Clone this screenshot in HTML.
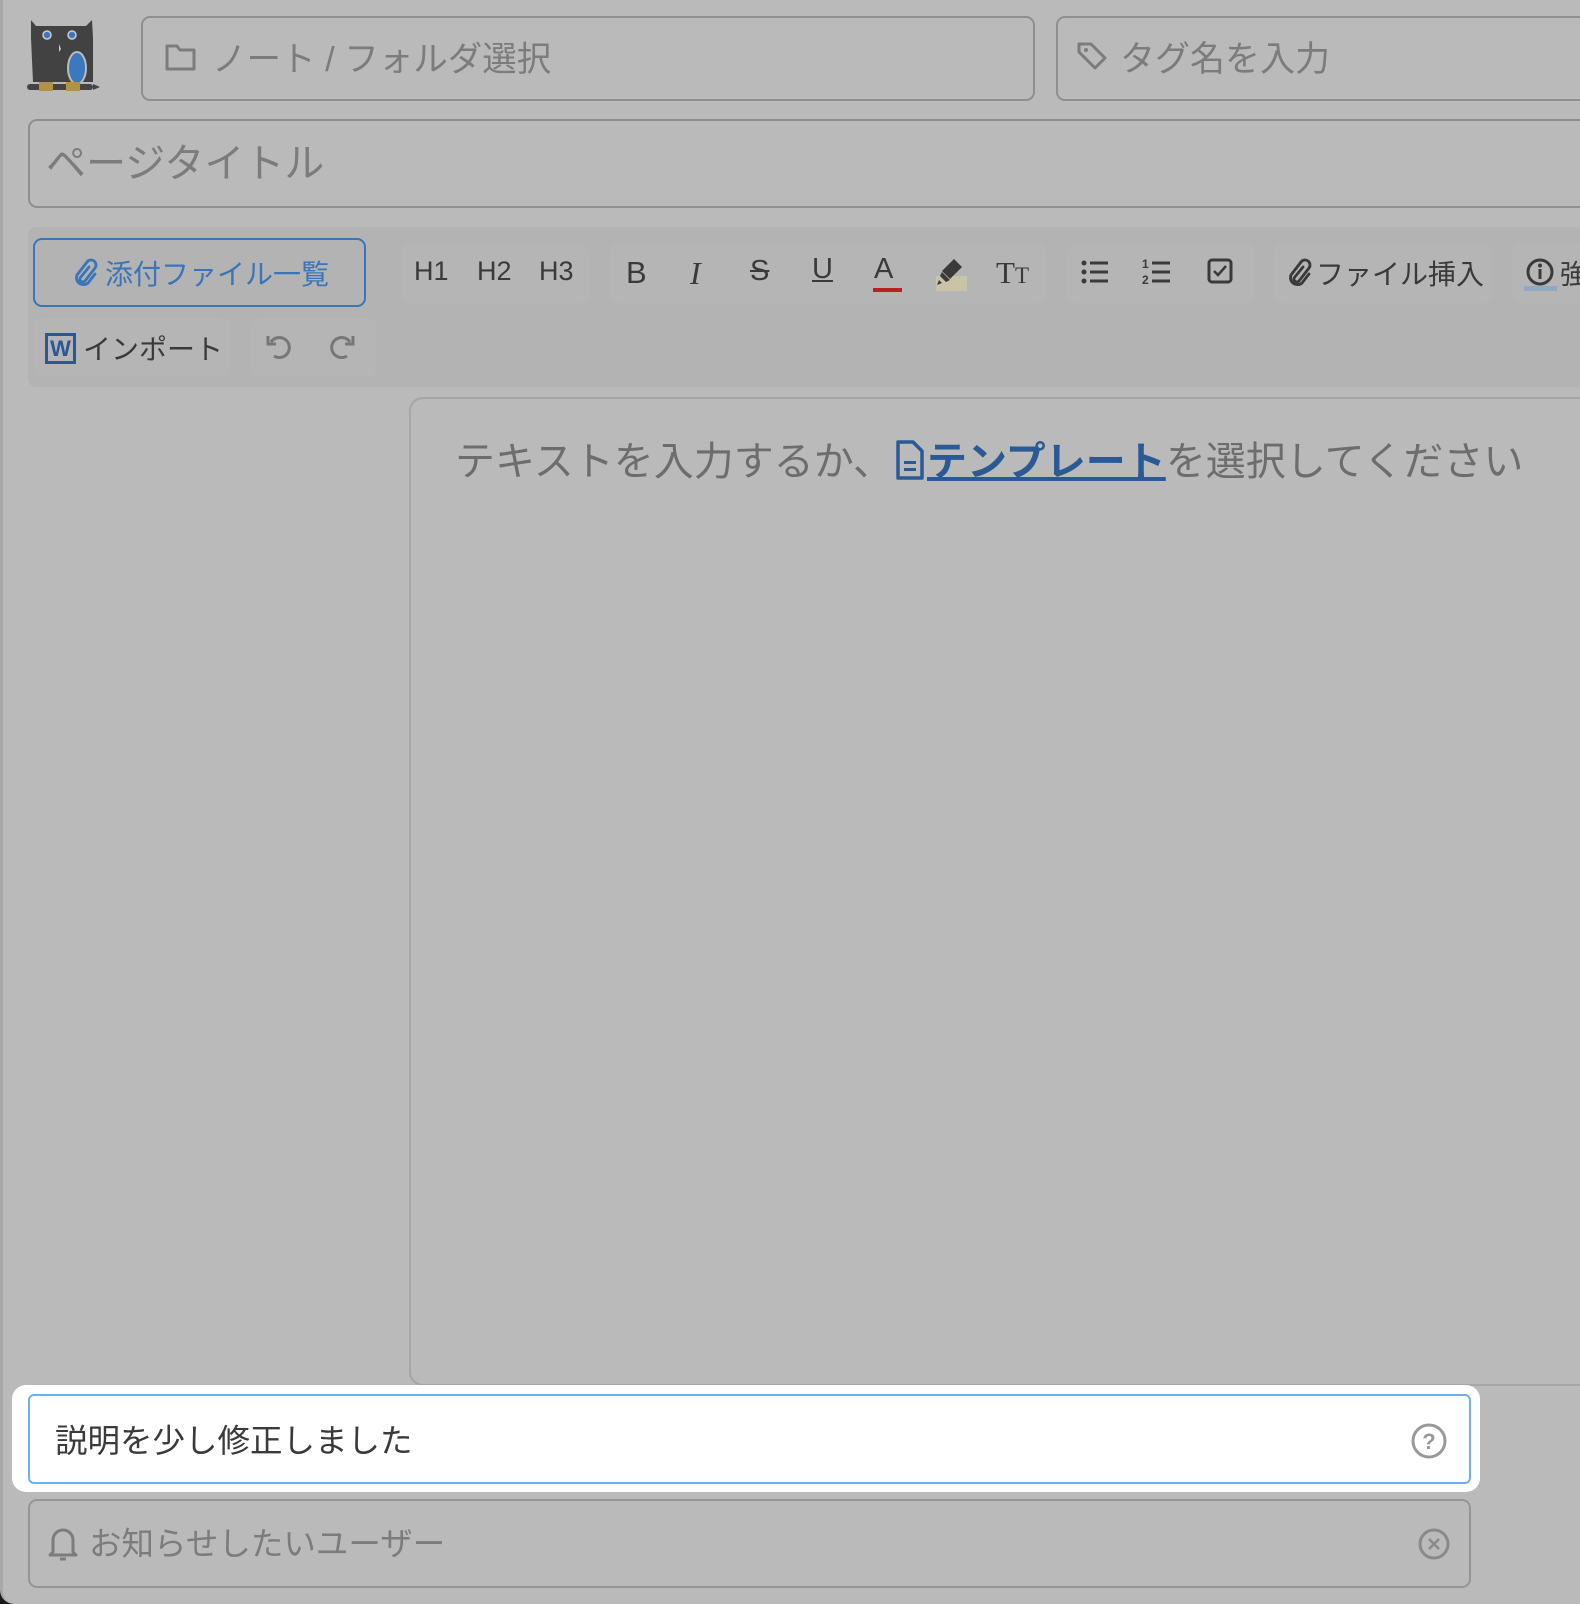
<!DOCTYPE html>
<html><head><meta charset="utf-8"><style>
*{box-sizing:border-box;margin:0;padding:0}
body{width:1580px;height:1604px;background:#1a1a1a;font-family:"Liberation Sans","Noto Sans CJK JP",sans-serif;overflow:hidden;position:relative}
.bg{position:absolute;left:0;top:0;width:1580px;height:1604px;background:#bababa;border-radius:0 0 0 14px;border-left:3px solid #a8a8a8}
.box{position:absolute;border:2px solid #8f8f8f;border-radius:9px}
.t{position:absolute;color:#7c7c7c;white-space:nowrap}
.grp{position:absolute;background:#b5b5b5;border-radius:8px}
.tb{position:absolute;color:#3a3a3a;font-size:27px;white-space:nowrap}
</style></head><body>
<div class="bg"></div>
<svg style="position:absolute;left:26px;top:18px" width="74" height="78" viewBox="0 0 74 78">
<path d="M5 2 L10 8 L60 8 L66 2 L67 20 L67 64 L7 64 L5 20Z" fill="#424242"/>
<circle cx="21" cy="17" r="4" fill="#3c78c0" stroke="#ccc" stroke-width="1.5"/>
<circle cx="46" cy="17" r="4" fill="#3c78c0" stroke="#ccc" stroke-width="1.5"/>
<path d="M33 26 l2 5 l-2 3z" fill="#ccc"/>
<ellipse cx="51" cy="50" rx="9" ry="16" fill="#3c78c0" stroke="#bbb" stroke-width="2"/>
<rect x="1" y="66" width="66" height="6" rx="3" fill="#444"/><path d="M67 66 l7 3 l-7 3z" fill="#444"/>
<rect x="13" y="64" width="14" height="9" fill="#b39148"/><rect x="40" y="64" width="14" height="9" fill="#b39148"/>
</svg>
<div class="box" style="left:141px;top:16px;width:894px;height:85px"></div>
<svg style="position:absolute;left:164px;top:42px" width="34" height="30" viewBox="0 0 34 30"><path d="M3 4 h10 l3 4 h14 v19 h-27z" fill="none" stroke="#7c7c7c" stroke-width="3" stroke-linejoin="round"/></svg>
<div class="t" style="left:212px;top:31px;font-size:34.5px">ノート / フォルダ選択</div>
<div class="box" style="left:1056px;top:16px;width:540px;height:85px"></div>
<svg style="position:absolute;left:1076px;top:40px" width="32" height="32" viewBox="0 0 32 32"><path d="M3 4 h12 l14 14 l-10 10 l-16 -16z" fill="none" stroke="#7c7c7c" stroke-width="3" stroke-linejoin="round"/><circle cx="10" cy="10" r="2" fill="#7c7c7c"/></svg>
<div class="t" style="left:1120px;top:31px;font-size:35px">タグ名を入力</div>
<div class="box" style="left:28px;top:119px;width:1580px;height:89px"></div>
<div class="t" style="left:46px;top:131px;font-size:40px">ページタイトル</div>
<div style="position:absolute;left:28px;top:227px;width:1560px;height:160px;background:#b3b3b3;border-radius:8px"></div>
<div style="position:absolute;left:33px;top:238px;width:333px;height:69px;border:2px solid #3b74b8;border-radius:9px"></div>
<svg style="position:absolute;left:72px;top:258px" width="26" height="30" viewBox="0 0 26 30"><path d="M17 9 l-9 11 a3 3 0 0 0 5 3 l10 -13 a5 5 0 0 0 -8 -6 l-10 13 a7 7 0 0 0 11 8 l7 -9" fill="none" stroke="#3b74b8" stroke-width="2.8" stroke-linecap="round"/></svg>
<div class="tb" style="left:105px;top:253px;color:#3b74b8;font-size:28px">添付ファイル一覧</div>
<div class="grp" style="left:401px;top:244px;width:188px;height:59px"></div>
<div class="tb" style="left:414px;top:256px">H1</div>
<div class="tb" style="left:477px;top:256px">H2</div>
<div class="tb" style="left:539px;top:256px">H3</div>
<div class="grp" style="left:610px;top:244px;width:436px;height:59px"></div>
<div class="tb" style="left:626px;top:255px;font-size:31px">B</div>
<div class="tb" style="left:690px;top:255px;font-family:'Liberation Serif',serif;font-size:32px;font-style:italic">I</div>
<div class="tb" style="left:750px;top:255px;font-size:29px;text-decoration:line-through">S</div>
<div class="tb" style="left:812px;top:253px;font-size:29px;text-decoration:underline">U</div>
<div class="tb" style="left:874px;top:253px;font-size:29px">A</div>
<div style="position:absolute;left:873px;top:288px;width:29px;height:4px;background:#b3261e"></div>
<div style="position:absolute;left:936px;top:276px;width:31px;height:15px;background:#c9c4a8"></div>
<svg style="position:absolute;left:934px;top:256px" width="32" height="32" viewBox="0 0 32 32"><path d="M20 3 l8 8 l-12 12 l-8 -8z M8 16 l8 8 l-4 2 l-6 -6z M5 24 l3 3 l-5 2z" fill="#3a3a3a"/></svg>
<div class="tb" style="left:996px;top:255px;font-family:'Liberation Serif',serif;font-size:31px">T<span style="font-size:23px">T</span></div>
<div class="grp" style="left:1067px;top:244px;width:188px;height:59px"></div>
<svg style="position:absolute;left:1080px;top:258px" width="32" height="30" viewBox="0 0 32 30"><g fill="#3a3a3a"><circle cx="4" cy="5" r="2.5"/><circle cx="4" cy="14" r="2.5"/><circle cx="4" cy="23" r="2.5"/><rect x="10" y="3.5" width="18" height="3"/><rect x="10" y="12.5" width="18" height="3"/><rect x="10" y="21.5" width="18" height="3"/></g></svg>
<svg style="position:absolute;left:1142px;top:256px" width="32" height="32" viewBox="0 0 32 32"><g fill="#3a3a3a"><text x="0" y="12" font-size="12" font-family="Liberation Sans" font-weight="bold">1</text><text x="0" y="28" font-size="12" font-family="Liberation Sans" font-weight="bold">2</text><rect x="10" y="5.5" width="18" height="3"/><rect x="10" y="14.5" width="18" height="3"/><rect x="10" y="23.5" width="18" height="3"/></g></svg>
<svg style="position:absolute;left:1206px;top:257px" width="28" height="28" viewBox="0 0 28 28"><rect x="3" y="3" width="22" height="22" rx="3" fill="none" stroke="#3a3a3a" stroke-width="3"/><path d="M8 14 l4 4 l8 -9" fill="none" stroke="#3a3a3a" stroke-width="2.5"/></svg>
<div class="grp" style="left:1274px;top:244px;width:218px;height:59px"></div>
<svg style="position:absolute;left:1286px;top:258px" width="26" height="30" viewBox="0 0 26 30"><path d="M17 9 l-9 11 a3 3 0 0 0 5 3 l10 -13 a5 5 0 0 0 -8 -6 l-10 13 a7 7 0 0 0 11 8 l7 -9" fill="none" stroke="#3a3a3a" stroke-width="2.8" stroke-linecap="round"/></svg>
<div class="tb" style="left:1316px;top:253px;font-size:28px">ファイル挿入</div>
<div class="grp" style="left:1512px;top:244px;width:100px;height:59px"></div>
<svg style="position:absolute;left:1525px;top:257px" width="30" height="30" viewBox="0 0 30 30"><circle cx="15" cy="15" r="12" fill="none" stroke="#3a3a3a" stroke-width="3"/><rect x="13.5" y="12" width="3" height="10" fill="#3a3a3a"/><circle cx="15" cy="8.5" r="2" fill="#3a3a3a"/></svg>
<div style="position:absolute;left:1524px;top:286px;width:33px;height:5px;background:#8fa9c2"></div>
<div class="tb" style="left:1560px;top:253px">強</div>
<div class="grp" style="left:33px;top:318px;width:198px;height:59px"></div>
<div style="position:absolute;left:45px;top:333px;width:31px;height:31px;border:3px solid #2b5797;color:#2b5797;font-weight:bold;font-size:22px;text-align:center;line-height:26px">W</div>
<div class="tb" style="left:83px;top:328px;font-size:28px">インポート</div>
<div class="grp" style="left:251px;top:318px;width:125px;height:59px"></div>
<svg style="position:absolute;left:264px;top:332px" width="100" height="30" viewBox="0 0 100 30"><g fill="none" stroke="#777" stroke-width="3"><path d="M7 10 a10 10 0 1 1 3 14"/><path d="M4 4 v8 h8"/><path d="M86 10 a10 10 0 1 0 -3 14"/><path d="M89 4 v8 h-8"/></g></svg>
<div style="position:absolute;left:409px;top:397px;width:1200px;height:989px;border:2px solid #a5a5a5;border-radius:14px"></div>
<div class="t" style="left:455px;top:429px;font-size:40px;color:#6d6d6d">テキストを入力するか、<svg width="34" height="42" viewBox="0 0 34 42" style="vertical-align:-6px"><path d="M5 3 h15 l9 9 v27 h-24z" fill="none" stroke="#2a5a96" stroke-width="3.5" stroke-linejoin="round"/><rect x="11" y="22" width="12" height="3" fill="#2a5a96"/><rect x="11" y="29" width="12" height="3" fill="#2a5a96"/></svg><span style="color:#2a5a96;text-decoration:underline;font-weight:bold">テンプレート</span>を選択してください</div>
<div style="position:absolute;left:12px;top:1385px;width:1468px;height:107px;background:#fff;border-radius:14px"></div>
<div style="position:absolute;left:28px;top:1394px;width:1443px;height:90px;border:2px solid #6eb0ee;border-radius:6px"></div>
<div class="t" style="left:55px;top:1415px;font-size:32.5px;color:#3a3a3a">説明を少し修正しました</div>
<svg style="position:absolute;left:1410px;top:1422px" width="38" height="38" viewBox="0 0 38 38"><circle cx="19" cy="19" r="16" fill="none" stroke="#999" stroke-width="3"/><text x="19" y="27" font-size="22" font-family="Liberation Sans" text-anchor="middle" fill="#999" font-weight="bold">?</text></svg>
<div class="box" style="left:28px;top:1499px;width:1443px;height:89px;border-color:#959595"></div>
<svg style="position:absolute;left:47px;top:1525px" width="32" height="38" viewBox="0 0 32 38"><path d="M6 27 v-12 a10 10 0 0 1 20 0 v12 l3 3 h-26z" fill="none" stroke="#7c7c7c" stroke-width="3" stroke-linejoin="round"/><path d="M13 34 h6" stroke="#7c7c7c" stroke-width="3"/></svg>
<div class="t" style="left:89px;top:1518px;font-size:32.5px">お知らせしたいユーザー</div>
<svg style="position:absolute;left:1417px;top:1527px" width="34" height="34" viewBox="0 0 34 34"><circle cx="17" cy="17" r="14" fill="none" stroke="#8a8a8a" stroke-width="3"/><path d="M12 12 l10 10 M22 12 l-10 10" stroke="#8a8a8a" stroke-width="2.5"/></svg>
</body></html>
